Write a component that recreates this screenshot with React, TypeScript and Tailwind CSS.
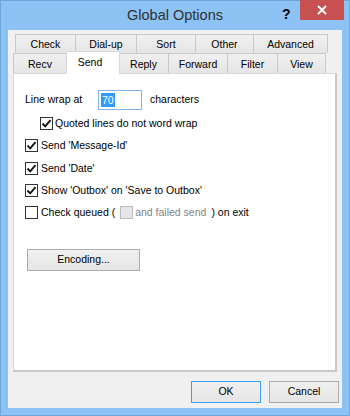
import React from 'react';

const font = { fontFamily: '"Liberation Sans", Arial, sans-serif' };

const topTabs = [
  { label: 'Check', w: 'w-[61px]' },
  { label: 'Dial-up', w: 'w-[62px]' },
  { label: 'Sort', w: 'w-[60px]' },
  { label: 'Other', w: 'w-[59px]' },
  { label: 'Advanced', w: 'w-[75px]' },
];

const bottomTabs = [
  { label: 'Recv', w: 'w-[54px]' },
  { label: 'Send', w: 'w-[54px]', active: true },
  { label: 'Reply', w: 'w-[51px]' },
  { label: 'Forward', w: 'w-[60px]' },
  { label: 'Filter', w: 'w-[51px]' },
  { label: 'View', w: 'w-[49px]' },
];

function Check({ checked, disabled }: { checked?: boolean; disabled?: boolean }) {
  return (
    <span
      className={`flex h-[13px] w-[13px] shrink-0 items-center justify-center border ${
        disabled ? 'border-[#bcbcbc] bg-[#e6e6e6]' : 'border-[#333333] bg-white'
      }`}
    >
      {checked && (
        <svg width="11" height="11" viewBox="0 0 11 11">
          <path d="M1.5 5.5 L4.2 8.3 L9.5 2.2" fill="none" stroke="#111" strokeWidth="1.9" />
        </svg>
      )}
    </span>
  );
}

function Tab({ label, w, active }: { label: string; w: string; active?: boolean }) {
  if (active) {
    return (
      <div
        className={`relative z-10 -mx-[1px] -mb-[1px] flex h-[23px] ${w} items-start justify-center border border-b-0 border-[#d9d9d9] bg-white pt-[3px] pr-[6px]`}
      >
        {label}
      </div>
    );
  }
  return (
    <div
      className={`flex h-full ${w} items-center justify-center border border-b-0 border-[#c9c9c9] bg-gradient-to-b from-[#f0f0f0] to-[#e5e5e5] pt-[2px] -ml-[1px] first:ml-0`}
    >
      {label}
    </div>
  );
}

export default function App() {
  return (
    <div
      className="flex h-[416px] w-[350px] flex-col border border-[#6fa6dc] bg-[#8cc3f4] text-[10.5px] text-black"
      style={font}
    >
      {/* title bar */}
      <div className="relative flex h-[29px] shrink-0 items-center justify-center">
        <span className="text-[14.5px] text-[#303030]">Global Options</span>
        <span className="absolute left-[281px] top-[3px] text-[14px] font-bold text-black">?</span>
        <div className="absolute right-[5px] top-[-1px] flex h-[20px] w-[44px] items-center justify-center bg-[#c75050]">
          <svg width="10" height="10" viewBox="0 0 10 10">
            <path d="M1 1 L9 9 M9 1 L1 9" stroke="#fff" strokeWidth="2" />
          </svg>
        </div>
      </div>

      {/* client */}
      <div className="mx-[7px] flex h-[378px] flex-col bg-[#f0f0f0] px-[5px] pt-[4px]">
        <div className="flex h-[19px] pl-[2px] pr-[1px]">
          {topTabs.map(t => (
            <Tab key={t.label} label={t.label} w={t.w} />
          ))}
        </div>
        <div className="flex h-[20px] items-end pr-[1px]">
          {bottomTabs.map(t => (
            <Tab key={t.label} label={t.label} w={t.w} active={t.active} />
          ))}
        </div>

        <div className="flex h-[299px] flex-col border border-[#d9d9d9] border-r-2 border-b-2 border-r-[#c8c8c8] border-b-[#c8c8c8] bg-white pl-[11px] pt-[16px]">
          <div className="flex h-[20px] items-center">
            <span className="w-[73px]">Line wrap at</span>
            <div className="flex h-[20px] w-[44px] items-center border border-[#7eb4ea] bg-white pl-[2px]">
              <span className="bg-[#3399ff] px-[1px] leading-[14px] text-white">70</span>
            </div>
            <span className="ml-[8px]">characters</span>
          </div>

          <label className="mt-[7px] flex h-[13px] items-center pl-[15px]">
            <Check checked />
            <span className="ml-[2px]">Quoted lines do not word wrap</span>
          </label>

          <label className="mt-[9px] flex h-[13px] items-center">
            <Check checked />
            <span className="ml-[3px]">Send 'Message-Id'</span>
          </label>

          <label className="mt-[10px] flex h-[13px] items-center">
            <Check checked />
            <span className="ml-[3px]">Send 'Date'</span>
          </label>

          <label className="mt-[9px] flex h-[13px] items-center">
            <Check checked />
            <span className="ml-[3px]">Show 'Outbox' on 'Save to Outbox'</span>
          </label>

          <div className="mt-[9px] flex h-[13px] items-center">
            <Check />
            <span className="ml-[3px]">Check queued (</span>
            <span className="ml-[5px]">
              <Check disabled />
            </span>
            <span className="ml-[2px] text-[#838383]">and failed send</span>
            <span className="ml-[5px]">) on exit</span>
          </div>

          <button className="ml-[2px] mt-[30px] flex h-[22px] w-[113px] items-center justify-center border border-[#acacac] bg-gradient-to-b from-[#f0f0f0] to-[#e5e5e5]">
            Encoding...
          </button>
        </div>

        <div className="-mr-[2px] mt-[9px] flex justify-end gap-[8px]">
          <button className="flex h-[22px] w-[70px] items-center justify-center border border-[#3c9ff0] bg-gradient-to-b from-[#f0f0f0] to-[#e5e5e5]">
            OK
          </button>
          <button className="flex h-[22px] w-[70px] items-center justify-center border border-[#acacac] bg-gradient-to-b from-[#f0f0f0] to-[#e5e5e5]">
            Cancel
          </button>
        </div>
      </div>
    </div>
  );
}
